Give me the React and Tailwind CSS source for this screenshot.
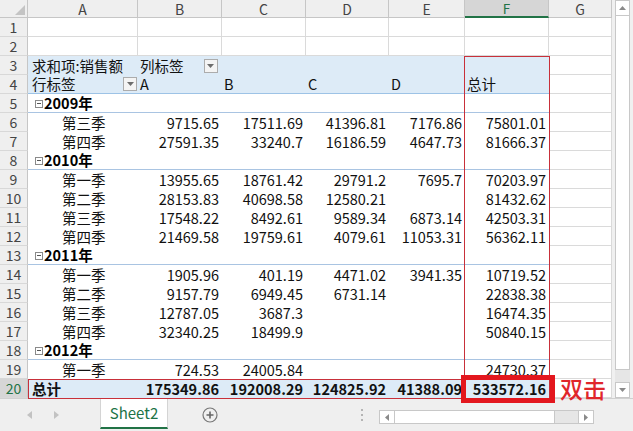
import React from 'react'

const FONT = { fontFamily: '"Noto Sans CJK SC", "Noto Sans", sans-serif' }

const widths = ['w-[110px]', 'w-[84px]', 'w-[84px]', 'w-[83px]', 'w-[76px]', 'w-[84px]']
const letters = ['A', 'B', 'C', 'D', 'E', 'F', 'G']

const body = [
  { type: 'year', label: '2009年' },
  { type: 'data', label: '第三季', v: ['9715.65', '17511.69', '41396.81', '7176.86', '75801.01'] },
  { type: 'data', label: '第四季', v: ['27591.35', '33240.7', '16186.59', '4647.73', '81666.37'] },
  { type: 'year', label: '2010年' },
  { type: 'data', label: '第一季', v: ['13955.65', '18761.42', '29791.2', '7695.7', '70203.97'] },
  { type: 'data', label: '第二季', v: ['28153.83', '40698.58', '12580.21', '', '81432.62'] },
  { type: 'data', label: '第三季', v: ['17548.22', '8492.61', '9589.34', '6873.14', '42503.31'] },
  { type: 'data', label: '第四季', v: ['21469.58', '19759.61', '4079.61', '11053.31', '56362.11'] },
  { type: 'year', label: '2011年' },
  { type: 'data', label: '第一季', v: ['1905.96', '401.19', '4471.02', '3941.35', '10719.52'] },
  { type: 'data', label: '第二季', v: ['9157.79', '6949.45', '6731.14', '', '22838.38'] },
  { type: 'data', label: '第三季', v: ['12787.05', '3687.3', '', '', '16474.35'] },
  { type: 'data', label: '第四季', v: ['32340.25', '18499.9', '', '', '50840.15'] },
  { type: 'year', label: '2012年' },
  { type: 'data', label: '第一季', v: ['724.53', '24005.84', '', '', '24730.37'] },
  { type: 'total', label: '总计', v: ['175349.86', '192008.29', '124825.92', '41388.09', '533572.16'] },
]

const RowHead = ({ n, selected }) => (
  <div
    className={`w-[28px] h-[19px] shrink-0 flex items-center justify-center border-r border-b border-r-[#c6c6c6] border-b-[#d8d8d8] text-[14px] leading-[16px] ${
      selected ? 'bg-[#d6d6d6] text-[#217346]' : 'bg-[#efefef] text-[#444]'
    }`}
  >
    {n}
  </div>
)

const GCell = () => <div className="w-[63px] h-[19px] shrink-0 border-r border-b border-[#dadada]" />

const Dropdown = () => (
  <div className="w-[14px] h-[14px] shrink-0 border border-[#acacac] bg-[#f4f4f4] flex items-center justify-center">
    <svg width="7" height="4" viewBox="0 0 7 4">
      <path d="M0 0h7L3.5 4z" fill="#6d6d6d" />
    </svg>
  </div>
)

const Minus = () => (
  <span className="inline-flex w-[8px] h-[8px] border border-[#8a8a8a] items-center justify-center mr-[1px] mt-[1px]">
    <span className="w-[4px] h-px bg-[#555]" />
  </span>
)

function PivotRow({ row, n }) {
  if (row.type === 'year') {
    return (
      <div className="flex">
        <RowHead n={n} />
        <div className="w-[521px] h-[19px] shrink-0 flex items-center pl-[7px] border-b border-[#a9c4e2] font-bold text-[14.5px] leading-[16px] text-black">
          <Minus />
          <span>{row.label}</span>
        </div>
        <GCell />
      </div>
    )
  }
  const total = row.type === 'total'
  return (
    <div className="flex">
      <RowHead n={n} selected={total} />
      <div
        className={`${widths[0]} h-[19px] shrink-0 flex items-center text-[14.5px] leading-[16px] ${
          total ? 'bg-[#ddebf7] font-bold pl-[4px]' : 'pl-[34px]'
        }`}
      >
        {row.label}
      </div>
      {row.v.map((v, i) => (
        <div
          key={i}
          className={`${widths[i + 1]} h-[19px] shrink-0 flex items-center justify-end pr-[3px] text-[14.5px] leading-[16px] overflow-hidden whitespace-nowrap ${
            total ? 'bg-[#ddebf7] font-bold' : ''
          }`}
        >
          {v}
        </div>
      ))}
      <GCell />
    </div>
  )
}

export default function App() {
  return (
    <div className="w-[633px] h-[431px] overflow-hidden bg-white text-[#111] flex flex-col relative leading-[16px]" style={FONT}>
      <div className="flex h-[398px]">
        <div className="w-[612px] flex flex-col">
          {/* column headers */}
          <div className="flex h-[18px]">
            <div className="w-[28px] h-[18px] bg-[#efefef] border-r border-b border-[#c6c6c6] flex items-end justify-end p-[2px]">
              <svg width="10" height="10" viewBox="0 0 10 10">
                <path d="M10 0V10H0z" fill="#c4c4c4" />
              </svg>
            </div>
            {letters.map((l, i) => (
              <div
                key={l}
                className={`${i < 6 ? widths[i] : 'w-[63px]'} h-[18px] shrink-0 flex items-center justify-center leading-[16px] border-r ${
                  l === 'F'
                    ? 'bg-[#d6d6d6] text-[#217346] text-[13.5px] border-b-2 border-b-[#217346] border-r-[#c6c6c6]'
                    : 'bg-[#efefef] text-[#444] text-[14px] border-b border-[#c6c6c6]'
                }`}
              >
                {l}
              </div>
            ))}
          </div>

          {/* rows 1-2 */}
          {[1, 2].map((n) => (
            <div key={n} className="flex">
              <RowHead n={n} />
              {widths.map((w, i) => (
                <div key={i} className={`${w} h-[19px] shrink-0 border-r border-b border-[#dadada]`} />
              ))}
              <GCell />
            </div>
          ))}

          {/* row 3 */}
          <div className="flex">
            <RowHead n={3} />
            <div className="w-[521px] h-[19px] shrink-0 bg-[#ddebf7] flex items-center text-[14.5px] leading-[16px]">
              <span className="w-[110px] pl-[4px] shrink-0">求和项:销售额</span>
              <span className="pl-[2px]">列标签</span>
              <span className="ml-[20px]">
                <Dropdown />
              </span>
            </div>
            <GCell />
          </div>

          {/* row 4 */}
          <div className="flex">
            <RowHead n={4} />
            <div className="w-[521px] h-[19px] shrink-0 bg-[#ddebf7] flex items-center text-[14.5px] leading-[16px] border-b border-[#9dc3e6]">
              <div className="w-[110px] shrink-0 flex items-center justify-between pl-[4px] pr-[1px]">
                <span>行标签</span>
                <Dropdown />
              </div>
              {['A', 'B', 'C', 'D', '总计'].map((t, i) => (
                <div key={t} className={`${widths[i + 1]} shrink-0 pl-[2px]`}>
                  {t}
                </div>
              ))}
            </div>
            <GCell />
          </div>

          {body.map((row, i) => (
            <PivotRow key={i} row={row} n={i + 5} />
          ))}
        </div>

        {/* vertical scrollbar */}
        <div className="w-[21px] bg-[#f0f0f0] px-[3px] flex flex-col">
          <div className="h-[16px] bg-white border border-[#c8c8c8] flex items-center justify-center">
            <svg width="7" height="4" viewBox="0 0 7 4">
              <path d="M0 4h7L3.5 0z" fill="#8a8a8a" />
            </svg>
          </div>
          <div className="h-[354px] bg-white border-x border-b border-[#c8c8c8]" />
          <div className="flex-1 bg-[#e6e6e6]" />
          <div className="h-[16px] bg-white border border-[#c8c8c8] flex items-center justify-center">
            <svg width="7" height="4" viewBox="0 0 7 4">
              <path d="M0 0h7L3.5 4z" fill="#8a8a8a" />
            </svg>
          </div>
        </div>
      </div>

      {/* sheet tabs bar */}
      <div className="flex-1 bg-[#efefef] border-t border-[#d0d0d0] flex items-start">
        <div className="w-[100px] h-full flex items-center gap-[22px] pl-[27px]">
          <svg width="5" height="8" viewBox="0 0 5 8">
            <path d="M5 0v8L0 4z" fill="#c2c2c2" />
          </svg>
          <svg width="5" height="8" viewBox="0 0 5 8">
            <path d="M0 0v8l5-4z" fill="#c2c2c2" />
          </svg>
        </div>
        <div className="w-[68px] h-[30px] bg-white border-x border-[#d4d4d4] border-b-2 border-b-[#217346] flex items-center justify-center text-[15px] text-[#217346]">
          Sheet2
        </div>
        <div className="w-[84px] h-full flex items-center justify-center">
          <svg width="16" height="16" viewBox="0 0 16 16">
            <circle cx="8" cy="8" r="7" fill="none" stroke="#777" strokeWidth="1.2" />
            <path d="M8 4.5v7M4.5 8h7" stroke="#666" strokeWidth="1.6" />
          </svg>
        </div>
        <div className="w-[127px] h-full flex items-center justify-end pr-[16px]">
          <span className="flex flex-col gap-[3px]">
            <span className="w-[2px] h-[2px] bg-[#b4b4b4]" />
            <span className="w-[2px] h-[2px] bg-[#b4b4b4]" />
            <span className="w-[2px] h-[2px] bg-[#b4b4b4]" />
          </span>
        </div>
        <div className="w-[215px] h-[14px] mt-[11px] flex border border-[#c8c8c8] bg-[#e6e6e6]">
          <div className="w-[15px] bg-white border-r border-[#c8c8c8] flex items-center justify-center">
            <svg width="4" height="7" viewBox="0 0 4 7">
              <path d="M4 0v7L0 3.5z" fill="#8a8a8a" />
            </svg>
          </div>
          <div className="w-[160px] bg-white border-r border-[#c8c8c8]" />
          <div className="flex-1" />
          <div className="w-[15px] bg-white border-l border-[#c8c8c8] flex items-center justify-center">
            <svg width="4" height="7" viewBox="0 0 4 7">
              <path d="M0 0v7l4-3.5z" fill="#8a8a8a" />
            </svg>
          </div>
        </div>
      </div>

      {/* annotations */}
      <div className="absolute left-[464px] top-[56px] w-[86px] h-[343px] border border-[#c8303a] pointer-events-none" />
      <div className="absolute left-[28px] top-[379px] w-[522px] h-[20px] border border-[#c8303a] pointer-events-none" />
      <div className="absolute left-[461px] top-[375px] w-[94px] h-[28px] border-[5px] border-[#e3171e] pointer-events-none" />
      <div className="absolute left-[560px] top-[373px] text-[23px] leading-[30px] font-medium text-[#e0262b]">双击</div>
    </div>
  )
}
